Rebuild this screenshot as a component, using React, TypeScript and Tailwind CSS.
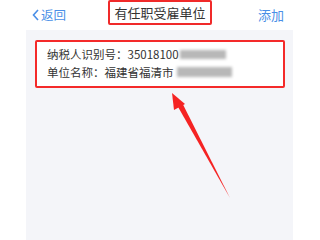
const font = { fontFamily: '"Noto Sans CJK SC", "Noto Sans", sans-serif' };

const App = () => {
  return (
    <div className="relative w-[320px] h-[240px] bg-white overflow-hidden" style={font}>
      {/* Header */}
      <div className="grid grid-cols-[1fr_auto_1fr] items-center h-[30px] px-[32px]">
        <div className="flex items-center text-[#4a8fe7] text-[12.5px]">
          <svg width="7" height="12" viewBox="0 0 7 12" className="mr-[2px]">
            <path d="M6 1 L1.5 6 L6 11" fill="none" stroke="#4a8fe7" strokeWidth="1.6" />
          </svg>
          <span>返回</span>
        </div>
        <div className="flex items-center justify-center w-[104px] h-[25px] -mt-[5px] border-2 border-[#f02a2a] rounded-[2px] text-[13px] text-[#333]">
          有任职受雇单位
        </div>
        <span className="justify-self-end mr-[4px] text-[13px] text-[#4a8fe7]">添加</span>
      </div>

      {/* Panel */}
      <div className="ml-[26px] w-[267px] h-[210px] bg-[#f4f5f9] pt-[10px] pl-[9px]">
        <div className="w-[250px] h-[48px] bg-white border-2 border-[#f42a2a] rounded-[2px] pt-[3px] pl-[10px] text-[11.5px] leading-[18px] text-[#333]">
          <div className="flex items-center">
            <span>纳税人识别号：35018100</span>
            <div className="ml-[1px] w-[46px] h-[9px] bg-[#b8b8b8] blur-[1.5px]" />
          </div>
          <div className="flex items-center">
            <span>单位名称：福建省福清市</span>
            <div className="ml-[3px] w-[55px] h-[10px] bg-[#b8b8b8] blur-[1.5px]" />
          </div>
        </div>
      </div>

      {/* Arrow */}
      <svg className="absolute left-0 top-0" width="320" height="240" viewBox="0 0 320 240">
        <polygon points="230,198 177.5,106 182.5,103.5" fill="#f52323" />
        <polygon points="172,93 174,110 185,104" fill="#f52323" />
      </svg>
    </div>
  );
};

export default App;
